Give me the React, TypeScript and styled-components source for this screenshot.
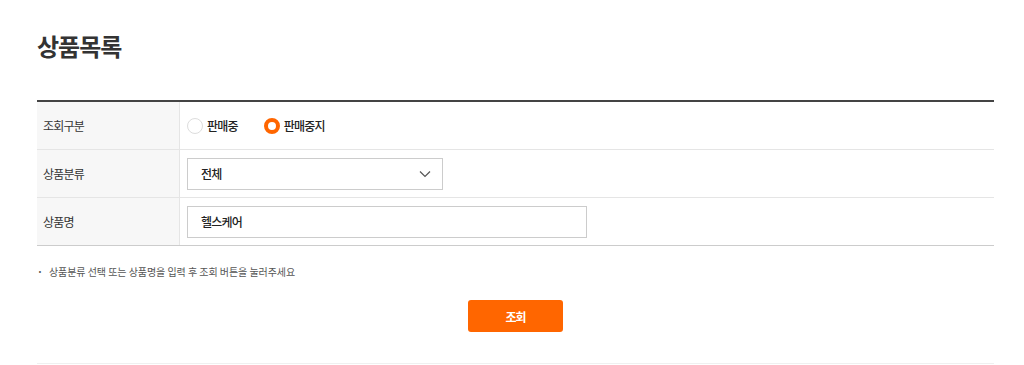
import styled, { createGlobalStyle } from "styled-components";

const GlobalStyle = createGlobalStyle`
  body {
    margin: 0;
    background: #fff;
    font-family: "Noto Sans CJK KR", "Noto Sans", sans-serif;
    color: #333;
  }
`;

const Page = styled.div`
  width: 957px;
  padding: 0 30px 0 37px;
`;

const Title = styled.h2`
  margin: 0;
  padding-top: 30px;
  height: 100px;
  box-sizing: border-box;
  font-size: 24px;
  font-weight: 700;
  letter-spacing: -1px;
  line-height: 32px;
  color: #333;
`;

const Table = styled.div`
  border-top: 2px solid #444;
  border-bottom: 1px solid #ccc;
`;

const Row = styled.div`
  display: grid;
  grid-template-columns: 143px 1fr;
  height: 47px;
  & + & {
    border-top: 1px solid #e5e5e5;
  }
`;

const Label = styled.div`
  background: #f7f7f7;
  border-right: 1px solid #e5e5e5;
  display: flex;
  align-items: center;
  padding-left: 6px;
  font-size: 12px;
  letter-spacing: -0.8px;
  color: #333;
`;

const Cell = styled.div`
  display: flex;
  align-items: center;
  padding-left: 7px;
  gap: 26px;
`;

const RadioLabel = styled.label`
  display: flex;
  align-items: center;
  gap: 4px;
  font-size: 12px;
  font-weight: 500;
  letter-spacing: -0.8px;
  color: #222;
`;

const RadioDot = styled.span<{ $checked?: boolean }>`
  width: 16px;
  height: 16px;
  box-sizing: border-box;
  border-radius: 50%;
  border: ${(p) => (p.$checked ? "4px solid #ff6600" : "1px solid #ddd")};
  background: #fff;
`;

const Field = styled.div<{ $width: number }>`
  width: ${(p) => p.$width}px;
  height: 32px;
  box-sizing: border-box;
  border: 1px solid #ccc;
  display: flex;
  align-items: center;
  justify-content: space-between;
  padding: 0 11px 0 13px;
  font-size: 12px;
  font-weight: 500;
  letter-spacing: -0.8px;
  color: #222;
`;

const Note = styled.p`
  margin: 0;
  padding: 18px 0 0 0;
  font-size: 10px;
  letter-spacing: -0.05px;
  color: #555;
  line-height: 16px;
  &::before {
    content: "·";
    margin-right: 6px;
    font-weight: 700;
  }
`;

const ButtonRow = styled.div`
  display: flex;
  justify-content: center;
  padding: 20px 0 31px;
  border-bottom: 1px solid #f0f0f0;
`;

const SearchButton = styled.button`
  width: 95px;
  height: 32px;
  border: 0;
  border-radius: 3px;
  background: #ff6600;
  color: #fff;
  font-family: inherit;
  font-size: 12px;
  font-weight: 700;
  letter-spacing: -1px;
`;

const Chevron = () => (
  <svg width="12" height="8" viewBox="0 0 12 8" fill="none">
    <path d="M1 1.5l5 5 5-5" stroke="#555" strokeWidth="1.2" />
  </svg>
);

export default function App() {
  return (
    <Page>
      <GlobalStyle />
      <Title>상품목록</Title>
      <Table>
        <Row>
          <Label>조회구분</Label>
          <Cell>
            <RadioLabel>
              <RadioDot />
              판매중
            </RadioLabel>
            <RadioLabel>
              <RadioDot $checked />
              판매중지
            </RadioLabel>
          </Cell>
        </Row>
        <Row>
          <Label>상품분류</Label>
          <Cell>
            <Field $width={256}>
              전체
              <Chevron />
            </Field>
          </Cell>
        </Row>
        <Row>
          <Label>상품명</Label>
          <Cell>
            <Field $width={400}>헬스케어</Field>
          </Cell>
        </Row>
      </Table>
      <Note>상품분류 선택 또는 상품명을 입력 후 조회 버튼을 눌러주세요</Note>
      <ButtonRow>
        <SearchButton>조회</SearchButton>
      </ButtonRow>
    </Page>
  );
}
